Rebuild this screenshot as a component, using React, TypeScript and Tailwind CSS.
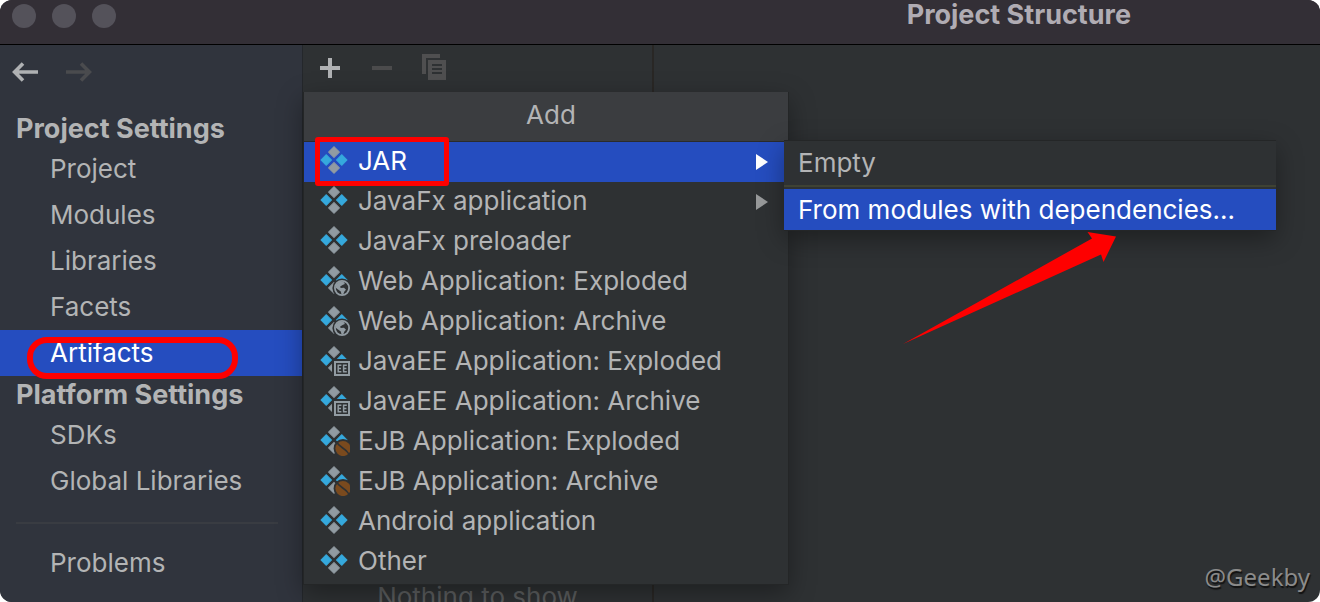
import type { ReactNode } from "react";

type Badge = "web" | "ee" | "bean";

type MenuEntry = {
  label: string;
  badge?: Badge;
  submenu?: boolean;
  selected?: boolean;
};

const artifactTypes: MenuEntry[] = [
  { label: "JAR", submenu: true, selected: true },
  { label: "JavaFx application", submenu: true },
  { label: "JavaFx preloader" },
  { label: "Web Application: Exploded", badge: "web" },
  { label: "Web Application: Archive", badge: "web" },
  { label: "JavaEE Application: Exploded", badge: "ee" },
  { label: "JavaEE Application: Archive", badge: "ee" },
  { label: "EJB Application: Exploded", badge: "bean" },
  { label: "EJB Application: Archive", badge: "bean" },
  { label: "Android application" },
  { label: "Other" },
];

function WebBadge() {
  return (
    <g>
      <circle cx="24" cy="24" r="9.6" fill="#2e3133" />
      <circle cx="24" cy="24" r="7.1" fill="none" stroke="#919ba2" strokeWidth="1.8" />
      <path
        d="M18 20.5 Q20 17.6 24 17.2 L26.4 18.4 L26.8 20 L24.6 21 L22.2 22.4 L22.6 24 L26 23.8 L28 25.8 L26.4 27.6 L25.2 30.6 L23.6 30.8 L22.8 27.4 L20 25.6 L17.4 23.4 Z"
        fill="#919ba2"
      />
    </g>
  );
}

function EeBadge() {
  return (
    <g>
      <rect x="14" y="15" width="18" height="17" fill="#2e3133" />
      <rect x="17" y="18" width="14" height="13" fill="none" stroke="#919ba2" strokeWidth="2" />
      <path
        d="M23.4 21.2 H20.2 V27.8 H23.4 M20.2 24.5 H23 M28.8 21.2 H25.6 V27.8 H28.8 M25.6 24.5 H28.4"
        fill="none"
        stroke="#919ba2"
        strokeWidth="1.5"
      />
    </g>
  );
}

function BeanBadge() {
  return (
    <g>
      <circle cx="25" cy="24.5" r="9.4" fill="#2e3133" />
      <circle cx="25" cy="24.5" r="7.6" fill="#7a4a1e" />
      <path d="M18.6 17.8 C21 24 28.4 23.6 31.6 31.4" fill="none" stroke="#2e3133" strokeWidth="1.7" />
    </g>
  );
}

function ArtifactIcon({ badge }: { badge?: Badge }) {
  return (
    <svg viewBox="0 0 32 32" className="size-8 shrink-0" aria-hidden="true">
      <g strokeWidth="1" strokeLinejoin="round">
        <path d="M16 2.6 L21.6 8.1 L16 13.6 L10.4 8.1 Z" fill="#919ba2" stroke="#919ba2" />
        <path d="M16 18.4 L21.6 23.9 L16 29.4 L10.4 23.9 Z" fill="#919ba2" stroke="#919ba2" />
        <path d="M8.2 10.5 L13.6 16 L8.2 21.5 L2.8 16 Z" fill="#35a9dd" stroke="#35a9dd" />
        <path d="M23.8 10.5 L29.2 16 L23.8 21.5 L18.4 16 Z" fill="#35a9dd" stroke="#35a9dd" />
      </g>
      {badge === "web" && <WebBadge />}
      {badge === "ee" && <EeBadge />}
      {badge === "bean" && <BeanBadge />}
    </svg>
  );
}

function SidebarHeading({ children }: { children: ReactNode }) {
  return <h2 className="flex h-9 items-center pt-0.5 pl-4 text-[27px] leading-8 font-bold">{children}</h2>;
}

function SidebarItem({ children, selected = false }: { children: string; selected?: boolean }) {
  return (
    <button
      type="button"
      aria-current={selected ? "page" : undefined}
      className={
        selected
          ? "relative flex h-[46px] w-full items-center bg-[#254dbf] pl-[50px] text-white"
          : "relative flex h-[46px] w-full items-center pl-[50px]"
      }
    >
      {children}
      {selected && (
        <span className="pointer-events-none absolute top-[7px] left-[27px] h-[42px] w-[211px] rounded-[20px] border-[6px] border-[#fe0000]" />
      )}
    </button>
  );
}

function AddMenu() {
  return (
    <div
      role="menu"
      aria-label="Add"
      className="absolute top-[47px] left-0 w-[486px] border-x border-b border-[#242627] bg-[#2e3133] pb-0.5 shadow-[0_8px_24px_rgba(0,0,0,0.35)]"
    >
      <div className="flex h-[50px] items-center justify-center border-b border-[#2a2b2c] bg-[#3b3d40] pb-[3px] pl-2.5">
        Add
      </div>
      {artifactTypes.map((entry) => (
        <button
          key={entry.label}
          type="button"
          role="menuitem"
          className={
            entry.selected
              ? "flex h-10 w-full items-center gap-2 bg-[#254dbf] pr-5 pb-1 pl-[14px] text-white"
              : "flex h-10 w-full items-center gap-2 pr-5 pb-1 pl-[14px]"
          }
        >
          <ArtifactIcon badge={entry.badge} />
          <span className="flex-1 pt-px text-left">{entry.label}</span>
          {entry.submenu && (
            <svg viewBox="0 0 12 20" className="h-5 w-3" aria-hidden="true">
              <path d="M0 4 L12 12 L0 20 Z" fill={entry.selected ? "#ffffff" : "#97999a"} />
            </svg>
          )}
        </button>
      ))}
      <span className="pointer-events-none absolute top-[45px] left-[11px] h-[49px] w-[134px] rounded-[3px] border-[5px] border-[#fe0000]" />
      <div
        role="menu"
        aria-label="JAR"
        className="absolute top-12 left-[480px] w-[492px] border-t border-b border-[#242627] bg-[#2e3133] shadow-[0_8px_24px_rgba(0,0,0,0.35)]"
      >
        <button type="button" role="menuitem" className="flex h-11 w-full items-center pl-[14px]">
          Empty
        </button>
        <div className="h-1 border-t-2 border-[#3f4233]" />
        <button
          type="button"
          role="menuitem"
          className="flex h-[41px] w-full items-center bg-[#254dbf] pl-[14px] text-white"
        >
          From modules with dependencies...
        </button>
        <svg
          viewBox="0 0 214 114"
          className="pointer-events-none absolute top-[90px] left-[119px] h-[114px] w-[214px]"
          aria-hidden="true"
        >
          <path d="M0 113 L189 7.5 L184.5 1 L213 5.5 L200.5 31 L198 23.5 Z" fill="#fe0000" />
        </svg>
      </div>
    </div>
  );
}

export default function App() {
  return (
    <div className="flex h-screen flex-col overflow-hidden rounded-xl bg-[#2e3133] font-['Inter','Liberation_Sans',sans-serif] text-[26px] leading-8 text-[#b3b4b5]">
      <header className="flex h-[45px] shrink-0 items-start border-b border-black bg-[#332f36]">
        <div className="flex gap-4 pt-1 pl-3">
          <span className="size-6 rounded-full bg-[#54525a]" />
          <span className="size-6 rounded-full bg-[#54525a]" />
          <span className="size-6 rounded-full bg-[#54525a]" />
        </div>
        <h1 className="mr-[189px] ml-auto text-[27px] leading-[30px] font-bold text-[#b0acb3]">
          Project Structure
        </h1>
      </header>

      <div className="flex min-h-0 flex-1">
        <nav className="w-[303px] shrink-0 border-r border-[#24272b] bg-[#30343d]">
          <div className="flex h-[65px] gap-7 pt-[15px] pl-3">
            <button type="button" aria-label="Back" className="h-6 w-[26px]">
              <svg viewBox="0 0 26 24" className="h-6 w-[26px]" fill="none" stroke="#afb1b3" strokeWidth="3.6">
                <path d="M26 12 H2.5 M11 3.6 L2.6 12 L11 20.4" />
              </svg>
            </button>
            <button type="button" aria-label="Forward" disabled className="h-6 w-[26px]">
              <svg viewBox="0 0 26 24" className="h-6 w-[26px]" fill="none" stroke="#4a4b4e" strokeWidth="3.6">
                <path d="M0 12 H23.5 M15 3.6 L23.4 12 L15 20.4" />
              </svg>
            </button>
          </div>
          <SidebarHeading>Project Settings</SidebarHeading>
          <SidebarItem>Project</SidebarItem>
          <SidebarItem>Modules</SidebarItem>
          <SidebarItem>Libraries</SidebarItem>
          <SidebarItem>Facets</SidebarItem>
          <SidebarItem selected>Artifacts</SidebarItem>
          <SidebarHeading>Platform Settings</SidebarHeading>
          <SidebarItem>SDKs</SidebarItem>
          <SidebarItem>Global Libraries</SidebarItem>
          <div className="mt-[18px] mr-6 mb-4 ml-4 h-[2px] bg-[#393c42]" />
          <SidebarItem>Problems</SidebarItem>
        </nav>

        <section className="relative w-[351px] shrink-0 border-r-2 border-[#292725]">
          <div className="flex h-[47px] items-center gap-6 pb-0.5 pl-[13px]">
            <button type="button" aria-label="Add" className="size-7">
              <svg viewBox="0 0 28 28" className="size-7" stroke="#afb1b3" strokeWidth="4">
                <path d="M4 14 H24 M14 4 V24" />
              </svg>
            </button>
            <button type="button" aria-label="Remove" disabled className="size-7">
              <svg viewBox="0 0 28 28" className="size-7" stroke="#4b4b4c" strokeWidth="4">
                <path d="M4 14 H24" />
              </svg>
            </button>
            <button type="button" aria-label="Copy" disabled className="size-7">
              <svg viewBox="0 0 28 28" className="size-7" fill="#4f4f50">
                <path d="M2 0 H20 V4 H6 V20 H2 Z" />
                <path
                  fillRule="evenodd"
                  d="M8 6 H26 V26 H8 Z M12 10 V12 H22 V10 Z M12 14 V16 H22 V14 Z M12 18 V20 H22 V18 Z"
                />
              </svg>
            </button>
          </div>
          <p className="pt-[489px] text-center text-[#5b5d5e]">Nothing to show</p>
          <AddMenu />
        </section>

        <main className="flex flex-1 items-end justify-end pr-[10px] pb-[9px]">
          <p className="font-['Noto_Sans','Open_Sans',sans-serif] text-[24px] text-[#8b8b8b] [text-shadow:1px_2px_1px_#111]">
            @Geekby
          </p>
        </main>
      </div>
    </div>
  );
}
